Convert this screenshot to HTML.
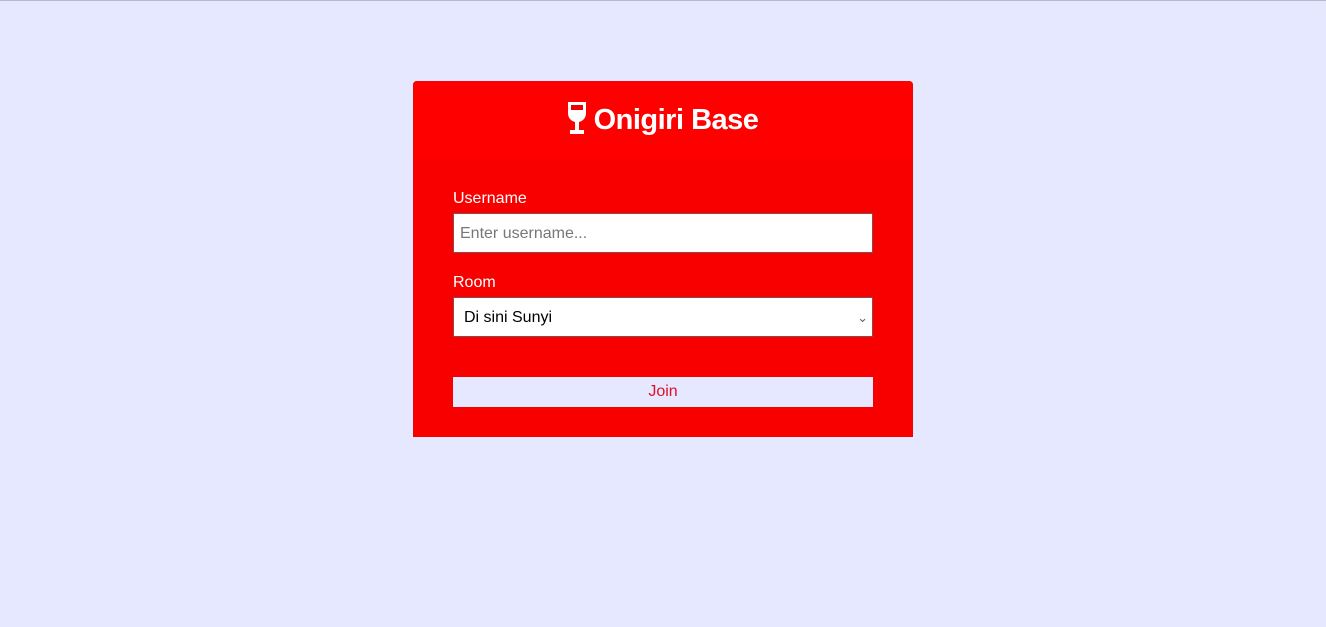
<!DOCTYPE html>
<html><head><style>
body{margin:0;background:#e6e8ff;font-family:"Liberation Sans",sans-serif;width:1326px;height:627px;overflow:hidden;border-top:1px solid #b8bacc;box-sizing:border-box;}
.card{position:absolute;left:413px;top:81px;width:500px;height:356px;background:#f90000;border-radius:4px 4px 0 0;overflow:hidden;}
.head{height:78px;background:#ff0000;color:#fff;text-align:center;font-weight:bold;font-size:29px;line-height:78px;letter-spacing:-0.5px}
.head svg{vertical-align:-6px;margin-right:8px}
label{position:absolute;left:40px;color:#fff;font-size:16px;}
.box{position:absolute;left:40px;width:418px;height:38px;background:#fff;border:1px solid #8a4a4a;font-size:16px;line-height:40px;}
.btn{position:absolute;left:40px;top:296px;width:420px;height:30px;background:#e6e8ff;color:#e0102a;text-align:center;line-height:30px;font-size:16px;}
</style></head><body>
<div class="card">
<div class="head"><svg width="18" height="33" viewBox="0 0 18 33"><path d="M0 0h18v11c0 5-3 8-7 9v8h5v4H2v-4h5v-8c-4-1-7-4-7-9z" fill="#fff"/><rect x="3" y="3" width="12" height="5" fill="#e00"/></svg>Onigiri Base</div>
<label style="top:109px">Username</label>
<div class="box" style="top:132px;color:#777;padding-left:6px;width:412px">Enter username...</div>
<label style="top:193px">Room</label>
<div class="box" style="top:216px;color:#000;padding-left:10px;width:408px">Di sini Sunyi<span style="position:absolute;right:4px;top:0;color:#666;font-size:13px">&#8964;</span></div>
<div class="btn">Join</div>
</div>
</body></html>
